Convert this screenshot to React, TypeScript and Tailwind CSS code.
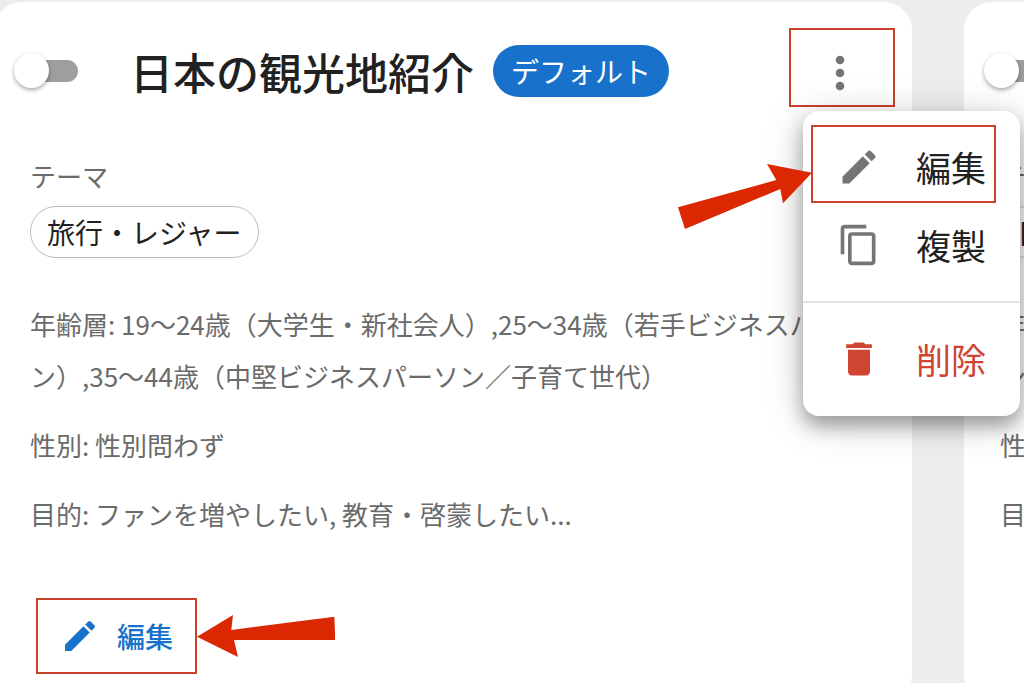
import { useState } from 'react';
import { MdContentCopy, MdDelete, MdEdit, MdMoreVert } from 'react-icons/md';

type Persona = {
  id: number;
  title: string;
  isDefault: boolean;
  theme: string;
  age: string;
  gender: string;
  purpose: string;
};

const PERSONAS: Persona[] = [
  {
    id: 1,
    title: '日本の観光地紹介',
    isDefault: true,
    theme: '旅行・レジャー',
    age: '19～24歳（大学生・新社会人）,25～34歳（若手ビジネスパーソン）,35～44歳（中堅ビジネスパーソン／子育て世代）',
    gender: '性別問わず',
    purpose: 'ファンを増やしたい, 教育・啓蒙したい...',
  },
  {
    id: 2,
    title: '日本の観光地紹介',
    isDefault: false,
    theme: '日本文化',
    age: '19～24歳（大学生・新社会人）,25～34歳（若手ビジネスパーソン）,35～44歳（中堅ビジネスパーソン／子育て世代）',
    gender: '性別問わず',
    purpose: 'ファンを増やしたい, 教育・啓蒙したい...',
  },
];

const MENU_ITEM = 'relative flex h-[78px] w-full items-center gap-[35px] pl-[34px] text-[35px]';

function ActionMenu() {
  return (
    <div
      role="menu"
      className="absolute left-[6px] top-[81px] z-20 w-[217px] rounded-2xl bg-white pb-[18px] pt-[17px] text-[#212121] shadow-[0_10px_18px_rgba(0,0,0,0.3),0_6px_40px_rgba(0,0,0,0.2)]"
    >
      <button type="button" role="menuitem" className={MENU_ITEM}>
        <MdEdit className="size-11 text-[#757575]" />
        編集
        <span className="absolute -top-[3px] bottom-[3px] left-2 right-6 border-2 border-[#c9412b]" />
      </button>
      <button type="button" role="menuitem" className={MENU_ITEM}>
        <MdContentCopy className="size-11 text-[#757575]" />
        複製
      </button>
      <hr className="my-[17px] border-t-2 border-[#e4e4e4]" />
      <button type="button" role="menuitem" className={`${MENU_ITEM} text-[#d04532]`}>
        <MdDelete className="size-11" />
        削除
      </button>
      <svg
        viewBox="0 0 136 68"
        className="absolute right-[208px] top-[52px] h-[68px] w-[136px] fill-[#dc2703]"
        aria-hidden="true"
      >
        <path d="M2 44.3 100.3 17 91 1 136 9.7 107 40.3 104.3 26 9 66Z" />
      </svg>
    </div>
  );
}

function PersonaCard({ persona, menuOpen }: { persona: Persona; menuOpen: boolean }) {
  const [enabled, setEnabled] = useState(false);
  const [open, setOpen] = useState(menuOpen);

  return (
    <article className="w-[calc(100%-106px)] shrink-0 rounded-[28px] bg-white px-9 pb-9 pt-7">
      <header className="-ml-2 -mr-[7px] flex h-[86px] items-start justify-between">
        <div className="flex h-[82px] items-center">
          <input
            type="checkbox"
            role="switch"
            aria-label={persona.title}
            checked={enabled}
            onChange={(e) => setEnabled(e.target.checked)}
            className="relative h-[22px] w-14 shrink-0 appearance-none rounded-full bg-[#9e9e9e] before:absolute before:-left-2 before:-top-[7px] before:size-[35px] before:rounded-full before:bg-white before:shadow-[0_2px_4px_rgba(0,0,0,0.35)] checked:before:left-7"
          />
          <h2 className="ml-[52px] whitespace-nowrap text-[43px] font-medium leading-[52px] text-[#212121]">
            {persona.title}
          </h2>
          {persona.isDefault && (
            <span className="ml-[19px] flex h-[52px] items-center whitespace-nowrap rounded-full bg-[#1871ca] px-[18px] text-[28px] text-white">
              デフォルト
            </span>
          )}
        </div>
        <div className="relative">
          <button
            type="button"
            aria-label="メニュー"
            onClick={() => setOpen(!open)}
            className="flex size-[86px] items-center justify-center text-[#757575]"
          >
            <MdMoreVert className="size-[52px]" />
          </button>
          {menuOpen && (
            <span className="pointer-events-none absolute -left-2 -right-3 -top-[2px] bottom-[9px] border-2 border-[#c9412b]" />
          )}
          {open && <ActionMenu />}
        </div>
      </header>

      <p className="mt-[34px]">テーマ</p>
      <span className="mt-1 flex h-[52px] w-fit items-center rounded-full border border-[#bdbdbd] px-4 text-[28px] text-[#212121]">
        {persona.theme}
      </span>

      <div className="mt-10 space-y-[17px]">
        <p>年齢層: {persona.age}</p>
        <p>性別: {persona.gender}</p>
        <p>目的: {persona.purpose}</p>
      </div>

      <button
        type="button"
        className="relative ml-3 mt-[65px] flex h-[62px] items-center gap-[17px] px-[18px] text-[28px] font-medium text-[#1871ca]"
      >
        <MdEdit className="size-10" />
        編集
        {menuOpen && (
          <>
            <span className="absolute -inset-x-1.5 -inset-y-[7px] border-2 border-[#c9412b]" />
            <svg
              viewBox="0 0 138 42"
              className="absolute left-[155px] top-[10px] h-[42px] w-[138px] fill-[#dc2703]"
              aria-hidden="true"
            >
              <path d="M0 21.7 36 0 34.3 15 137.3 1.7 138.3 25 37 25 41 42Z" />
            </svg>
          </>
        )}
      </button>
    </article>
  );
}

export default function App() {
  return (
    <main
      lang="ja"
      className="flex h-screen items-start overflow-hidden bg-[#ededed] pt-0.5 font-['Noto_Sans_CJK_JP',sans-serif] text-[26px] leading-[52px] text-[#6b6b6b]"
    >
      <div className="-ml-1.5 flex w-full shrink-0 gap-[52px]">
        {PERSONAS.map((persona) => (
          <PersonaCard key={persona.id} persona={persona} menuOpen={persona.id === 1} />
        ))}
      </div>
    </main>
  );
}
